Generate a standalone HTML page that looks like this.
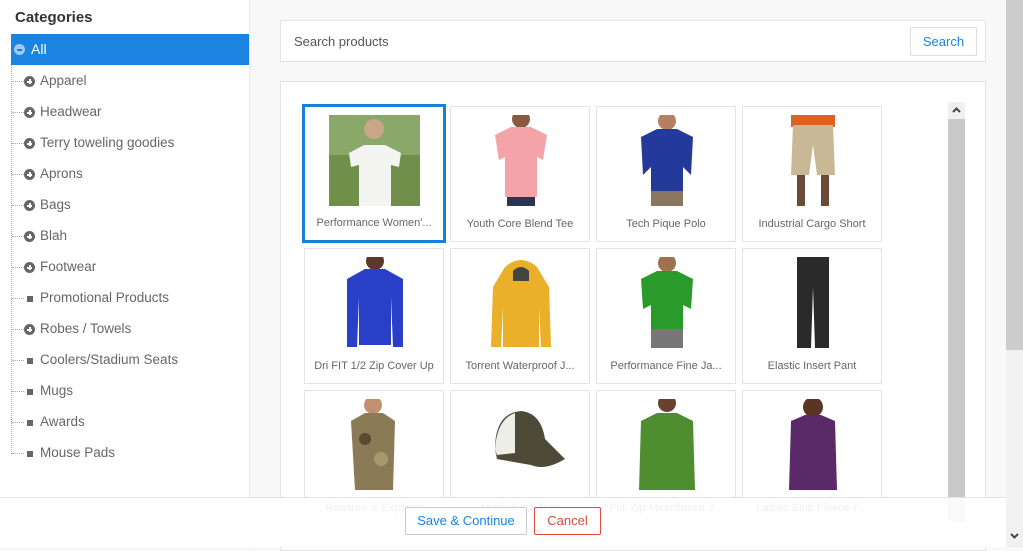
<!DOCTYPE html>
<html><head><meta charset="utf-8"><style>
*{margin:0;padding:0;box-sizing:border-box}
body{width:1023px;height:547px;overflow:hidden;font-family:"Liberation Sans",Arial,sans-serif;background:#f8f8f8;position:relative}
.left{position:absolute;left:0;top:0;width:250px;height:547px;background:#fff;border-right:1px solid #e6e6e6}
.title{position:absolute;left:15px;top:9px;font-size:15px;font-weight:bold;color:#333}
.all{position:absolute;left:11px;top:34px;width:238px;height:31px;background:#1a84e0;color:#fff;font-size:14px}
.all span{position:absolute;left:20px;top:7px}
.all i{position:absolute;left:3px;top:10px;width:11px;height:11px;border-radius:50%;background:#9ccaf2}
.all i:after{content:"";position:absolute;left:3px;top:5px;width:5px;height:1.5px;background:#1a84e0}
.vline{position:absolute;left:11px;top:65px;height:389px;border-left:1px dotted #aaa}
.it{position:absolute;left:12px;height:20px;font-size:13.5px;color:#666}
.it .h{position:absolute;left:0;top:11px;width:12px;border-top:1px dotted #aaa}
.it .p{position:absolute;left:12px;top:6px;width:11px;height:11px;border-radius:50%;background:#666}
.it .p:before{content:"";position:absolute;left:3px;top:5px;width:5px;height:1.5px;background:#fff}
.it .p:after{content:"";position:absolute;left:5px;top:3px;width:1.5px;height:5px;background:#fff}
.it .s{position:absolute;left:15px;top:9px;width:6px;height:6px;background:#666}
.it span{position:absolute;left:28px;top:3px;white-space:nowrap}
.search{position:absolute;left:280px;top:20px;width:706px;height:42px;background:#fff;border:1px solid #e3e3e3}
.search span{position:absolute;left:13px;top:13px;font-size:13px;color:#555}
.sbtn{position:absolute;left:629px;top:6px;width:67px;height:29px;border:1px solid #ddd;border-radius:2px;color:#1a84e0;font-size:13px;text-align:center;line-height:27px}
.res{position:absolute;left:280px;top:81px;width:706px;height:470px;background:#fff;border:1px solid #e3e3e3}
.card{position:absolute;width:140px;height:136px;border:1px solid #e3e3e3;background:#fff}
.card.sel{border:3px solid #1a7fdb}
.card svg{position:absolute;left:24px;top:8px}
.card.sel svg{left:24px;top:8px}
.card .l{position:absolute;left:0;right:0;top:111px;text-align:center;font-size:11px;color:#666;white-space:nowrap}
.card.sel .l{top:110px}
.sb{position:absolute;left:948px;top:102px;width:17px;height:420px;background:#c9c9c9}
.sbu{position:absolute;left:948px;top:102px;width:17px;height:17px;background:#f0f0f0}
.pagesb{position:absolute;left:1006px;top:0;width:17px;height:547px;background:#f1f1f1}
.pagesb div{position:absolute;left:0;top:0;width:17px;height:350px;background:#cdcdcd}
.foot{position:absolute;left:0;top:497px;width:1006px;height:50px;background:rgba(255,255,255,.9);border-top:1px solid #e3e3e3}
.b1{position:absolute;left:405px;top:9px;width:122px;height:28px;border:1px solid #ccc;border-radius:2px;color:#1a84e0;font-size:13px;text-align:center;line-height:26px;background:#fff}
.b2{position:absolute;left:534px;top:9px;width:67px;height:28px;border:1px solid #e04a3a;border-radius:2px;color:#e04a3a;font-size:13px;text-align:center;line-height:26px;background:#fff}
</style></head><body>
<div class="left">
<div class="title">Categories</div>
<div class="all"><i></i><span>All</span></div>
<div class="vline"></div>
<div class="it" style="top:70px"><b class="h"></b><b class="p"></b><span>Apparel</span></div>
<div class="it" style="top:101px"><b class="h"></b><b class="p"></b><span>Headwear</span></div>
<div class="it" style="top:132px"><b class="h"></b><b class="p"></b><span>Terry toweling goodies</span></div>
<div class="it" style="top:163px"><b class="h"></b><b class="p"></b><span>Aprons</span></div>
<div class="it" style="top:194px"><b class="h"></b><b class="p"></b><span>Bags</span></div>
<div class="it" style="top:225px"><b class="h"></b><b class="p"></b><span>Blah</span></div>
<div class="it" style="top:256px"><b class="h"></b><b class="p"></b><span>Footwear</span></div>
<div class="it" style="top:287px"><b class="h"></b><b class="s"></b><span>Promotional Products</span></div>
<div class="it" style="top:318px"><b class="h"></b><b class="p"></b><span>Robes / Towels</span></div>
<div class="it" style="top:349px"><b class="h"></b><b class="s"></b><span>Coolers/Stadium Seats</span></div>
<div class="it" style="top:380px"><b class="h"></b><b class="s"></b><span>Mugs</span></div>
<div class="it" style="top:411px"><b class="h"></b><b class="s"></b><span>Awards</span></div>
<div class="it" style="top:442px"><b class="h"></b><b class="s"></b><span>Mouse Pads</span></div>
</div>
<div class="search"><span>Search products</span><div class="sbtn">Search</div></div>
<div class="res"></div>

<div class="card sel" style="left:302px;top:104px;width:144px;height:139px"><svg width="91" height="91"><rect width="91" height="91" fill="#6f8f4a"/><rect x="0" y="0" width="91" height="40" fill="#8aa86a"/><circle cx="45" cy="14" r="10" fill="#c9a58a"/><path d="M20 38 L35 30 L56 30 L72 38 L70 52 L62 50 L62 91 L30 91 L30 50 L22 52Z" fill="#f4f4f2"/></svg><div class="l">Performance Women'...</div></div>
<div class="card" style="left:450px;top:106px"><svg width="91" height="91"><circle cx="46" cy="4" r="9" fill="#8a5a40"/><path d="M20 20 L36 12 L56 12 L72 20 L68 45 L62 42 L62 82 L30 82 L30 42 L24 45Z" fill="#f4a3a8"/><rect x="32" y="82" width="28" height="9" fill="#2a3550"/></svg><div class="l">Youth Core Blend Tee</div></div>
<div class="card" style="left:596px;top:106px"><svg width="91" height="91"><circle cx="46" cy="6" r="9" fill="#b48060"/><path d="M20 22 L36 14 L56 14 L72 22 L70 60 L62 52 L62 76 L30 76 L30 52 L22 60Z" fill="#243a9a"/><rect x="30" y="76" width="32" height="15" fill="#8a7660"/></svg><div class="l">Tech Pique Polo</div></div>
<div class="card" style="left:742px;top:106px"><svg width="91" height="91"><rect x="24" y="0" width="44" height="12" fill="#e06020"/><path d="M26 10 L66 10 L68 60 L50 60 L46 30 L42 60 L24 60Z" fill="#c9b896"/><rect x="30" y="60" width="8" height="31" fill="#6b4a38"/><rect x="54" y="60" width="8" height="31" fill="#6b4a38"/></svg><div class="l">Industrial Cargo Short</div></div>

<div class="card" style="left:304px;top:248px"><svg width="91" height="91"><circle cx="46" cy="4" r="9" fill="#5a3a2a"/><path d="M18 22 L36 12 L56 12 L74 22 L74 90 L64 90 L62 40 L62 88 L30 88 L30 40 L28 90 L18 90Z" fill="#2a3fc8"/></svg><div class="l">Dri FIT 1/2 Zip Cover Up</div></div>
<div class="card" style="left:450px;top:248px"><svg width="91" height="91"><path d="M30 10 Q46 -4 62 10 L74 30 L76 90 L66 90 L64 50 L64 90 L28 90 L28 50 L26 90 L16 90 L18 30Z" fill="#eab02a"/><path d="M38 14 Q46 6 54 14 L54 24 L38 24Z" fill="#444"/></svg><div class="l">Torrent Waterproof J...</div></div>
<div class="card" style="left:596px;top:248px"><svg width="91" height="91"><circle cx="46" cy="6" r="9" fill="#a07050"/><path d="M20 22 L36 14 L56 14 L72 22 L70 52 L62 48 L62 72 L30 72 L30 48 L22 52Z" fill="#2a9a2a"/><rect x="30" y="72" width="32" height="19" fill="#777"/></svg><div class="l">Performance Fine Ja...</div></div>
<div class="card" style="left:742px;top:248px"><svg width="91" height="91"><path d="M30 0 L62 0 L62 91 L48 91 L46 30 L44 91 L30 91Z" fill="#2a2a2a"/></svg><div class="l">Elastic Insert Pant</div></div>

<div class="card" style="left:304px;top:390px"><svg width="91" height="91"><circle cx="44" cy="6" r="9" fill="#c09070"/><path d="M22 22 L36 14 L54 14 L66 22 L64 91 L26 91Z" fill="#8a7a55"/><circle cx="36" cy="40" r="6" fill="#5a4a30"/><circle cx="52" cy="60" r="7" fill="#a89870"/></svg><div class="l">Realtree ® Explorer</div></div>
<div class="card" style="left:450px;top:390px"><svg width="91" height="91"><path d="M20 50 Q20 14 46 12 Q66 14 70 40 L90 60 Q70 72 56 66 L22 60Z" fill="#4e4a38"/><path d="M20 50 Q22 20 40 14 L40 54 L22 56Z" fill="#eeeee8"/></svg><div class="l">Mesh Back Cap</div></div>
<div class="card" style="left:596px;top:390px"><svg width="91" height="91"><circle cx="46" cy="4" r="9" fill="#6a4030"/><path d="M20 22 L36 14 L56 14 L72 22 L74 91 L18 91Z" fill="#4e8e30"/></svg><div class="l">Full Zip Microfleece J...</div></div>
<div class="card" style="left:742px;top:390px"><svg width="91" height="91"><circle cx="46" cy="8" r="10" fill="#5a3424"/><path d="M24 22 L38 16 L54 16 L68 22 L70 91 L22 91Z" fill="#5a2a68"/></svg><div class="l">Ladies Slub Fleece F...</div></div>

<div class="sb"></div><div class="sbu"><svg width="17" height="17"><path d="M5 10 L8.5 6.5 L12 10" stroke="#444" stroke-width="2" fill="none"/></svg></div>
<div class="pagesb"><div></div></div>
<div class="foot"><div class="b1">Save &amp; Continue</div><div class="b2">Cancel</div></div>
<svg style="position:absolute;left:1006px;top:528px" width="17" height="17"><path d="M5 6 L8.5 9.5 L12 6" stroke="#444" stroke-width="2" fill="none"/></svg>
</body></html>
